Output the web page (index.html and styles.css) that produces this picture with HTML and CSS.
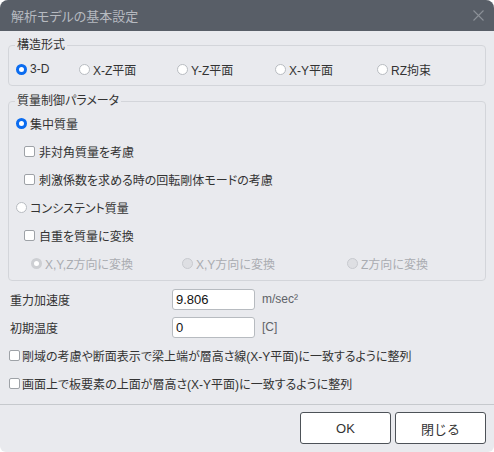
FILE: index.html
```html
<!DOCTYPE html>
<html lang="ja">
<head>
<meta charset="utf-8">
<title>解析モデルの基本設定</title>
<link rel="stylesheet" href="styles.css">
</head>
<body>
<div class="window">
  <div class="titlebar">
    <span class="title">解析モデルの基本設定</span>
    <svg class="close" viewBox="0 0 11 11" aria-hidden="true"><path d="M0.5 0.5 L10.5 10.5 M10.5 0.5 L0.5 10.5" stroke="#8b9097" stroke-width="1.1" fill="none"/></svg>
  </div>
  <div class="content">
    <fieldset class="group g1">
      <legend>構造形式</legend>
      <div class="type-row">
        <label class="opt"><span class="radio on"></span>3-D</label>
        <label class="opt"><span class="radio"></span>X-Z平面</label>
        <label class="opt"><span class="radio"></span>Y-Z平面</label>
        <label class="opt"><span class="radio"></span>X-Y平面</label>
        <label class="opt"><span class="radio"></span>RZ拘束</label>
      </div>
    </fieldset>
    <fieldset class="group g2">
      <legend>質量制御パラメータ</legend>
      <label class="row"><span class="radio on"></span>集中質量</label>
      <label class="row indent"><span class="check"></span>非対角質量を考慮</label>
      <label class="row indent"><span class="check"></span>刺激係数を求める時の回転剛体モードの考慮</label>
      <label class="row"><span class="radio"></span>コンシステント質量</label>
      <label class="row indent"><span class="check"></span>自重を質量に変換</label>
      <div class="row dir-row">
        <label class="opt dis"><span class="radio dis on"></span>X,Y,Z方向に変換</label>
        <label class="opt dis"><span class="radio dis"></span>X,Y方向に変換</label>
        <label class="opt dis"><span class="radio dis"></span>Z方向に変換</label>
      </div>
    </fieldset>
    <div class="field-row">
      <span class="flabel">重力加速度</span>
      <input class="num" type="text" value="9.806">
      <span class="unit">m/sec²</span>
    </div>
    <div class="field-row">
      <span class="flabel">初期温度</span>
      <input class="num" type="text" value="0">
      <span class="unit">[C]</span>
    </div>
    <label class="row bottom-check"><span class="check"></span>剛域の考慮や断面表示で梁上端が層高さ線(X-Y平面)に一致するように整列</label>
    <label class="row bottom-check"><span class="check"></span>画面上で板要素の上面が層高さ(X-Y平面)に一致するように整列</label>
  </div>
  <div class="footer">
    <button class="btn" type="button">OK</button>
    <button class="btn" type="button">閉じる</button>
  </div>
</div>
</body>
</html>
```
FILE: styles.css
```css
* { box-sizing: border-box; }
html, body { margin: 0; padding: 0; background: #ffffff; }
body {
  font-family: "Liberation Sans", "Noto Sans CJK JP", sans-serif;
  font-size: 12px;
  color: #333333;
  font-feature-settings: "palt";
}
.window {
  width: 494px;
  height: 452px;
  background: #e9eaee;
  border-radius: 8px 8px 6px 6px;
  overflow: hidden;
  display: flex;
  flex-direction: column;
}
.titlebar {
  height: 31px;
  flex: none;
  background: #585e67;
  display: flex;
  align-items: center;
  justify-content: space-between;
  padding: 0 10px 0 11px;
}
.title { color: #b6bac0; font-size: 13px; }
.close { width: 11px; height: 11px; display: block; }
.content { padding: 0 8px; flex: 1; }
.group {
  margin: 6px 0 0;
  border: 1px solid #d3d5da;
  border-radius: 4px;
  padding: 6px 7px 6px;
  min-inline-size: 0;
}
.group legend {
  padding: 0 2px;
  margin-left: -1px;
  line-height: 16px;
  font-size: 12px;
  color: #333333;
}
.g2 { margin-top: 7px; padding-top: 0; padding-bottom: 3px; }
.type-row {
  display: grid;
  grid-template-columns: 63px 98px 98px 102px auto;
  height: 20px;
}
.opt { display: flex; align-items: center; white-space: nowrap; }
.opt.dis { color: #a9acb1; }
.radio {
  width: 11px; height: 11px;
  border-radius: 50%;
  border: 1px solid #b8bcc1;
  background: #ffffff;
  margin-right: 3px;
  flex: none;
}
.radio.on { border: 3px solid #0b6cf0; }
.radio.dis { background: #dedfe3; border-color: #c8cacf; }
.radio.dis.on { border: 3px solid #cdcfd3; background: #ffffff; }
.check {
  width: 11px; height: 11px;
  border: 1px solid #9ea2a7;
  border-radius: 2px;
  background: #ffffff;
  margin-right: 4px;
  flex: none;
}
.row { display: flex; align-items: center; height: 28px; white-space: nowrap; }
.indent { padding-left: 8px; }
.dir-row {
  display: grid;
  grid-template-columns: 151px 165px auto;
  padding-left: 15px;
}
.field-row { display: flex; align-items: center; height: 28px; padding-left: 2px; }
.field-row:first-of-type { margin-top: 4px; }
.flabel { width: 162px; }
.num {
  width: 83px;
  height: 21px;
  border: 1px solid #b7bbc0;
  border-radius: 3px;
  background: #ffffff;
  padding: 0 3px;
  font-family: "Liberation Sans", sans-serif;
  font-size: 13px;
  color: #111111;
  margin: 0;
}
.unit { margin-left: 7px; color: #5e6267; }
.bottom-check { padding-left: 1px; }
.bottom-check .check { margin-right: 2px; }
.footer {
  flex: none;
  border-top: 1px solid #c6c9cd;
  padding: 7px 8px 8px;
  display: flex;
  justify-content: flex-end;
  gap: 4px;
}
.btn {
  width: 91px;
  height: 32px;
  background: #ffffff;
  border: 1px solid #4d5258;
  border-radius: 3px;
  font-family: "Liberation Sans", "Noto Sans CJK JP", sans-serif;
  font-size: 13px;
  color: #333333;
  margin: 0;
}
```
